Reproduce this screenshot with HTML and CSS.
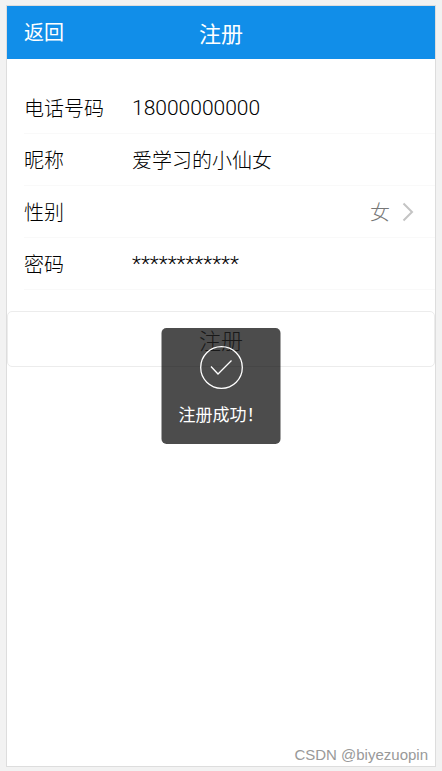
FILE: index.html
```html
<!DOCTYPE html>
<html lang="zh-CN">
<head>
    <meta charset="UTF-8">
    <meta name="viewport" content="width=device-width, initial-scale=1.0">
    <title>注册</title>
    <link rel="stylesheet" href="styles.css">
</head>
<body>
    <div class="page">
        <header class="header">
            <button type="button" class="back">返回</button>
            <h1 class="title">注册</h1>
        </header>

        <form class="form">
            <div class="cells">
                <div class="cell">
                    <label for="phone">电话号码</label>
                    <input type="tel" id="phone" class="latin" value="18000000000">
                </div>
                <div class="cell">
                    <label for="nickname">昵称</label>
                    <input type="text" id="nickname" value="爱学习的小仙女">
                </div>
                <div class="cell">
                    <label for="gender">性别</label>
                    <select id="gender">
                        <option>男</option>
                        <option selected>女</option>
                    </select>
                    <svg class="arrow" width="12" height="20" viewBox="0 0 12 20" aria-hidden="true">
                        <path d="M1.5 1.5L10 10L1.5 18.5" fill="none" stroke="#c4c4c4" stroke-width="2"/>
                    </svg>
                </div>
                <div class="cell">
                    <label for="password">密码</label>
                    <input type="text" id="password" class="latin" value="************">
                </div>
            </div>
            <button type="button" class="submit">注册</button>
        </form>

        <!-- success toast -->
        <div class="toast" role="status">
            <svg width="44" height="44" viewBox="0 0 44 44" aria-hidden="true">
                <circle cx="22" cy="22.5" r="20.8" fill="none" stroke="#fff" stroke-width="1.3"/>
                <path d="M11.5 21.5L18.5 29L32 15.5" fill="none" stroke="#fff" stroke-width="1.3"/>
            </svg>
            <p>注册成功！</p>
        </div>

        <span class="watermark">CSDN @biyezuopin</span>
    </div>
</body>
</html>
```
FILE: styles.css
```css
* {
    box-sizing: border-box;
}

body {
    margin: 0;
    padding: 5px 6px 4px;
    min-height: 100vh;
    display: flex;
    background-color: #f2f2f2;
    color: #000;
    font-family: "Noto Sans CJK SC", sans-serif;
    font-size: 20px;
    font-weight: 300;
}

button,
input,
select {
    font: inherit;
    color: inherit;
    margin: 0;
    padding: 0;
    border: none;
    background: none;
    outline: none;
}

.page {
    position: relative;
    flex: 1;
    background-color: #fff;
    border: 1px solid #ddd;
}

.header {
    display: grid;
    grid-template-columns: 1fr auto 1fr;
    align-items: center;
    height: 53px;
    padding: 0 17px 2px;
    background-color: #118ee9;
    color: #fff;
    font-weight: 400;
}

.back {
    justify-self: start;
}

.title {
    margin: 0;
    font-size: 22px;
    font-weight: 400;
}

.cells {
    margin: 23px 0 21px;
    padding-left: 17px;
}

.cell {
    display: flex;
    align-items: center;
    height: 52px;
    padding-right: 21px;
    border-bottom: 1px solid #f9f9f9;
}

.cell label {
    width: 108px;
}

.cell input,
.cell select {
    flex: 1;
    min-width: 0;
}

.cell .latin {
    font-family: Roboto, sans-serif;
    font-size: 21px;
}

.cell select {
    appearance: none;
    text-align-last: right;
    color: #777;
}

.arrow {
    margin-left: 12px;
}

.submit {
    display: block;
    width: 100%;
    height: 56px;
    border: 1px solid #ececec;
    border-radius: 5px;
    color: #555;
    font-size: 22px;
}

.toast {
    position: absolute;
    top: 322px;
    left: 50%;
    transform: translateX(-50%);
    padding: 17px 17px 18px;
    border-radius: 5px;
    background-color: rgba(0, 0, 0, 0.7);
    color: #fff;
    font-size: 17px;
    font-weight: 400;
    line-height: 24px;
    text-align: center;
    white-space: nowrap;
}

.toast svg {
    display: block;
    margin: 0 auto;
}

.toast p {
    margin: 13px 0 0;
}

.watermark {
    position: absolute;
    right: 7px;
    bottom: 3px;
    color: #999;
    font-family: "Liberation Sans", sans-serif;
    font-size: 15px;
    font-weight: 400;
}
```
